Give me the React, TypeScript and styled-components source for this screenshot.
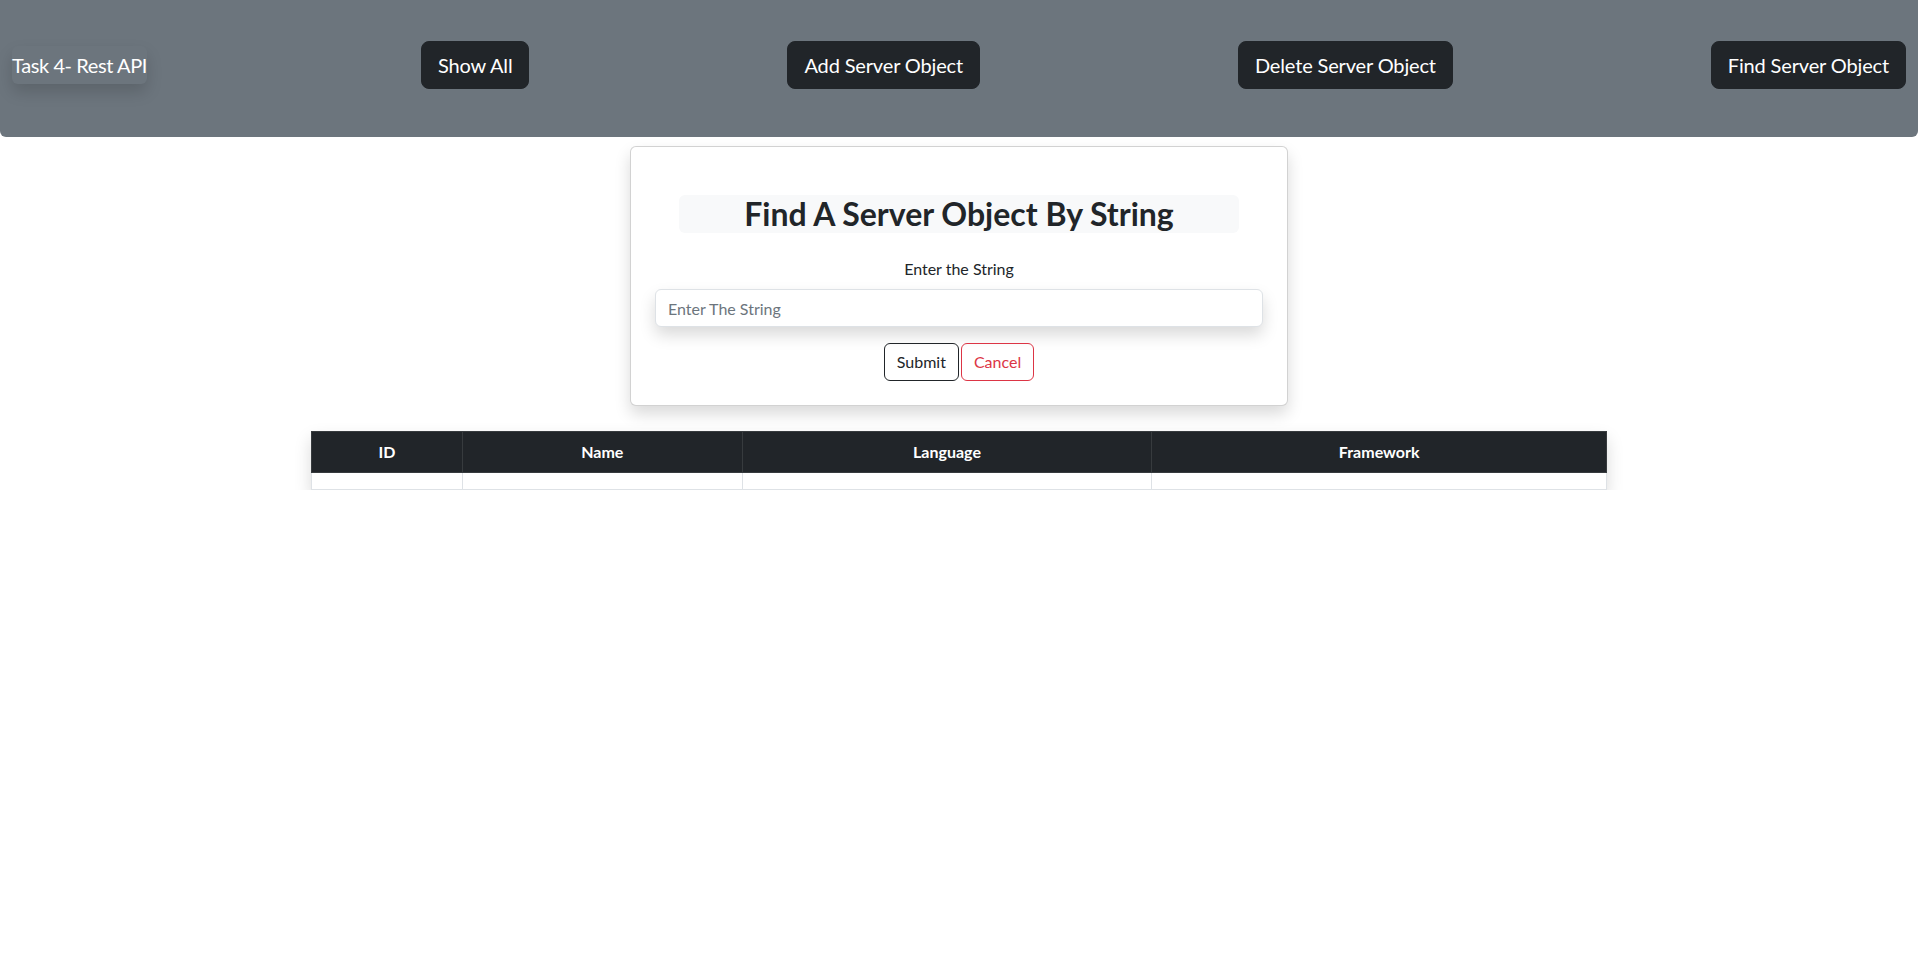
import React from "react";
import styled, { createGlobalStyle } from "styled-components";

const GlobalStyle = createGlobalStyle`
  html, body {
    margin: 0;
    padding: 0;
    background: #ffffff;
    font-family: Lato, "Noto Sans", "Liberation Sans", sans-serif;
    color: #212529;
    font-size: 16px;
    line-height: 1.5;
  }
  * { box-sizing: border-box; }
`;

const Navbar = styled.nav`
  display: flex;
  align-items: center;
  justify-content: space-between;
  height: 137px;
  padding: 0 12px 7px 12px;
  background: #6c757d;
  border-radius: 0 0 6px 6px;
`;

const Brand = styled.div`
  margin-right: 16px;
  padding: 4px 0;
  font-size: 20px;
  line-height: 30px;
  letter-spacing: -0.4px;
  color: #ffffff;
  border-radius: 6px;
  box-shadow: 0 8px 16px rgba(0, 0, 0, 0.15);
  white-space: nowrap;
`;

const NavButton = styled.button`
  height: 48px;
  padding: 8px 16px;
  font-family: inherit;
  font-size: 20px;
  line-height: 30px;
  letter-spacing: -0.15px;
  color: #ffffff;
  background: #212529;
  border: 1px solid #212529;
  border-radius: 8px;
  white-space: nowrap;
  cursor: pointer;
`;

const Main = styled.main`
  display: flex;
  flex-direction: column;
  align-items: center;
  padding-top: 9px;
`;

const Card = styled.section`
  width: 658px;
  padding: 24px 24px 24px;
  background: #ffffff;
  border: 1px solid rgba(0, 0, 0, 0.175);
  border-radius: 6px;
  box-shadow: 0 8px 16px rgba(0, 0, 0, 0.15);
  text-align: center;
`;

const Heading = styled.h2`
  margin: 24px 24px 24px;
  height: 38px;
  font-size: 32px;
  font-weight: 700;
  line-height: 38px;
  background: #f8f9fa;
  border-radius: 6px;
  color: #212529;
`;

const Label = styled.label`
  display: block;
  margin-bottom: 8px;
  font-size: 16px;
  line-height: 24px;
`;

const Input = styled.input`
  display: block;
  width: 100%;
  height: 38px;
  padding: 6px 12px;
  font-family: inherit;
  font-size: 16px;
  color: #212529;
  border: 1px solid #dee2e6;
  border-radius: 6px;
  box-shadow: 0 8px 16px rgba(0, 0, 0, 0.15);
  outline: none;
  &::placeholder {
    color: #6c757d;
  }
`;

const Actions = styled.div`
  display: flex;
  justify-content: center;
  gap: 2px;
  margin-top: 16px;
`;

const OutlineButton = styled.button<{ $tone: string }>`
  height: 38px;
  padding: 6px 12px;
  font-family: inherit;
  font-size: 16px;
  line-height: 24px;
  color: ${(p) => p.$tone};
  background: transparent;
  border: 1px solid ${(p) => p.$tone};
  border-radius: 6px;
  cursor: pointer;
`;

const Table = styled.table`
  width: 1296px;
  margin-top: 25px;
  border-collapse: collapse;
  box-shadow: 0 8px 16px rgba(0, 0, 0, 0.15);
`;

const HeadCell = styled.th<{ $w: number }>`
  width: ${(p) => p.$w}px;
  padding: 8px;
  font-size: 16px;
  font-weight: 700;
  line-height: 24px;
  color: #ffffff;
  background: #212529;
  border: 1px solid #373b3e;
  text-align: center;
`;

const BodyCell = styled.td`
  height: 17px;
  padding: 8px;
  border: 1px solid #dee2e6;
  background: #ffffff;
`;

const columns = [
  { label: "ID", w: 151 },
  { label: "Name", w: 280 },
  { label: "Language", w: 410 },
  { label: "Framework", w: 455 },
];

export default function App() {
  return (
    <>
      <GlobalStyle />
      <Navbar>
        <Brand>Task 4- Rest API</Brand>
        <NavButton>Show All</NavButton>
        <NavButton>Add Server Object</NavButton>
        <NavButton>Delete Server Object</NavButton>
        <NavButton>Find Server Object</NavButton>
      </Navbar>
      <Main>
        <Card>
          <Heading>Find A Server Object By String</Heading>
          <Label htmlFor="find-string">Enter the String</Label>
          <Input id="find-string" placeholder="Enter The String" />
          <Actions>
            <OutlineButton $tone="#212529">Submit</OutlineButton>
            <OutlineButton $tone="#dc3545">Cancel</OutlineButton>
          </Actions>
        </Card>
        <Table>
          <thead>
            <tr>
              {columns.map((c) => (
                <HeadCell key={c.label} $w={c.w}>
                  {c.label}
                </HeadCell>
              ))}
            </tr>
          </thead>
          <tbody>
            <tr>
              {columns.map((c) => (
                <BodyCell key={c.label} />
              ))}
            </tr>
          </tbody>
        </Table>
      </Main>
    </>
  );
}
